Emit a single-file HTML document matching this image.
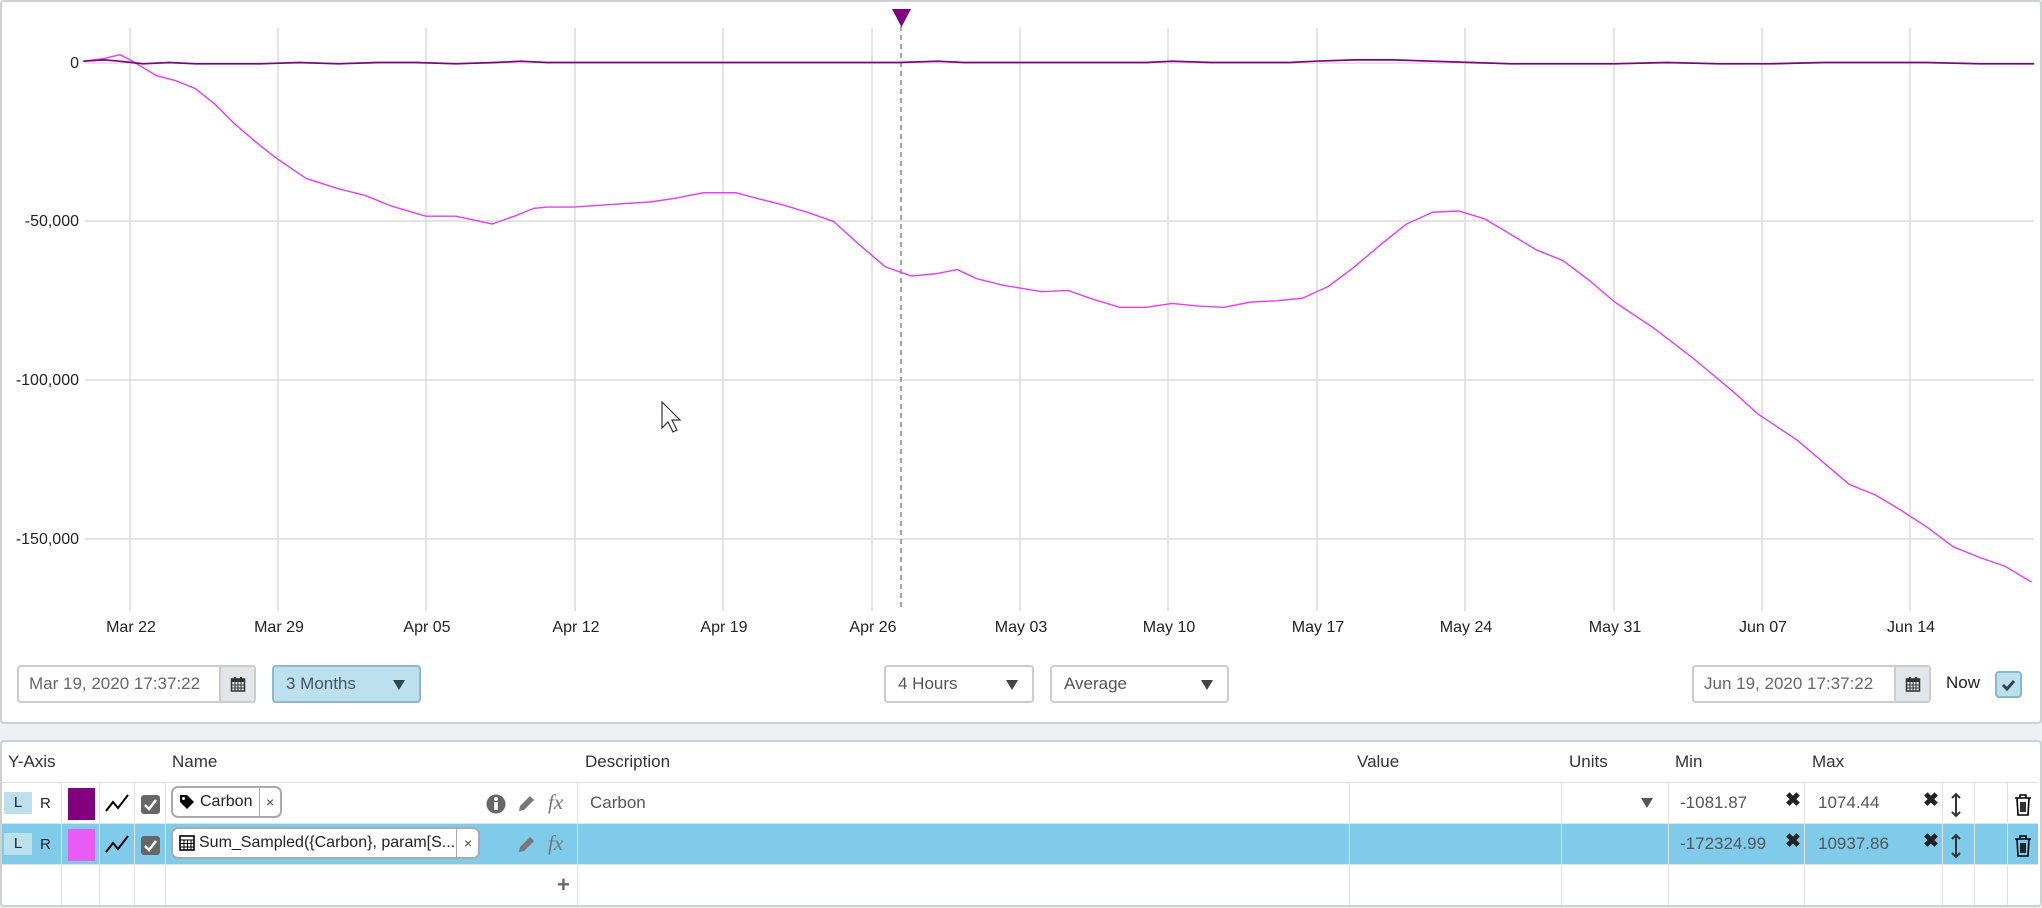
<!DOCTYPE html>
<html><head><meta charset="utf-8"><style>
*{box-sizing:border-box;margin:0;padding:0}
body{width:2042px;height:908px;background:#edf0f4;font-family:"Liberation Sans",sans-serif;position:relative;overflow:hidden;color:#222}
.p{position:absolute;background:#fff;border:2px solid #d0d0d0;border-radius:4px}
.a{position:absolute}
.inp{position:absolute;border:2px solid #ccc;border-radius:4px;background:#fff;font-size:17px;color:#666;padding-left:10px;line-height:34px;height:38px}
.cal{position:absolute;top:0;right:0;width:35px;height:34px;background:#e2e5ea;border-left:2px solid #ccc;display:flex;align-items:center;justify-content:center}
.sel{position:absolute;border:2px solid #ccc;border-radius:4px;background:#fff;font-size:17px;color:#555;padding-left:12px;line-height:34px;height:38px}
.tri{position:absolute;right:14px;top:13px;width:0;height:0;border-left:6px solid transparent;border-right:6px solid transparent;border-top:10px solid #444}
.h{position:absolute;font-size:17px;color:#333;top:752px}
.vl{position:absolute;top:782px;height:123px;width:1px;background:#e2e2e2}
.hl{position:absolute;left:2px;width:2036px;height:1px;background:#e2e2e2}
.t{position:absolute;font-size:17px;color:#555}
</style></head><body>
<div class="p" style="left:0;top:0;width:2042px;height:724px"></div>
<div class="p" style="left:0;top:740px;width:2042px;height:167px"></div>

<svg class="a" style="left:0;top:0" width="2042" height="908" viewBox="0 0 2042 908">
<g stroke="#dcdcdc" stroke-width="1.5">
<line x1="85" y1="63" x2="2034" y2="63"/><line x1="85" y1="221" x2="2034" y2="221"/><line x1="85" y1="380" x2="2034" y2="380"/><line x1="85" y1="539" x2="2034" y2="539"/>
<line x1="130" y1="28" x2="130" y2="611"/><line x1="278" y1="28" x2="278" y2="611"/><line x1="426" y1="28" x2="426" y2="611"/><line x1="575" y1="28" x2="575" y2="611"/><line x1="723" y1="28" x2="723" y2="611"/><line x1="872" y1="28" x2="872" y2="611"/><line x1="1020" y1="28" x2="1020" y2="611"/><line x1="1168" y1="28" x2="1168" y2="611"/><line x1="1317" y1="28" x2="1317" y2="611"/><line x1="1465" y1="28" x2="1465" y2="611"/><line x1="1614" y1="28" x2="1614" y2="611"/><line x1="1762" y1="28" x2="1762" y2="611"/><line x1="1910" y1="28" x2="1910" y2="611"/>
</g>
<g font-size="16" fill="#222" text-anchor="end" font-family="Liberation Sans">
<text x="79" y="68">0</text><text x="79" y="226">-50,000</text><text x="79" y="385">-100,000</text><text x="79" y="544">-150,000</text>
</g>
<g font-size="16" fill="#222" text-anchor="middle" font-family="Liberation Sans">
<text x="131" y="632">Mar 22</text><text x="279" y="632">Mar 29</text><text x="427" y="632">Apr 05</text><text x="576" y="632">Apr 12</text><text x="724" y="632">Apr 19</text><text x="873" y="632">Apr 26</text><text x="1021" y="632">May 03</text><text x="1169" y="632">May 10</text><text x="1318" y="632">May 17</text><text x="1466" y="632">May 24</text><text x="1615" y="632">May 31</text><text x="1763" y="632">Jun 07</text><text x="1911" y="632">Jun 14</text>
</g>
<line x1="901" y1="26" x2="901" y2="611" stroke="#888" stroke-width="1.5" stroke-dasharray="5,4"/>
<polygon points="892,9 911,9 901.5,27" fill="#800080"/>
<g transform="scale(1.3023)">
<polyline fill="none" stroke="#e040fb" stroke-width="1.1" stroke-linejoin="round" points="64,47 80,45 92,42 100,46 110,52 120,58 135,62 150,68 165,80 180,95 200,112 213,122 235,137 260,145 280,150 300,158 327,166 350,166 378,172 395,166 410,160 420,159 440,159 470,157 500,155 520,152 540,148 565,148 580,152 600,157 620,163 640,170 660,188 680,205 700,212 720,210 735,207 750,214 770,219 800,224 820,223 840,230 860,236 880,236 900,233 920,235 940,236 960,232 980,231 1000,229 1020,220 1040,205 1060,188 1080,172 1100,163 1120,162 1140,168 1160,180 1180,192 1200,200 1220,215 1240,232 1270,252 1300,275 1330,300 1350,318 1380,338 1400,355 1420,372 1440,380 1460,392 1480,405 1500,420 1520,428 1540,435 1560,447"/>
<polyline fill="none" stroke="#800080" stroke-width="1.3" points="64,47 80,46 92,47 110,49 130,48 150,49 170,49 200,49 230,48 260,49 290,48 320,48 350,49 380,48 400,47 420,48 450,48 480,48 510,48 540,48 570,48 600,48 630,48 660,48 690,48 720,47 740,48 760,48 790,48 820,48 850,48 880,48 900,47 930,48 960,48 990,48 1010,47 1040,46 1070,46 1100,47 1130,48 1160,49 1200,49 1240,49 1280,48 1320,49 1360,49 1400,48 1440,48 1480,48 1520,49 1562,49"/>
</g>
<path d="M662,402 L662,428 L668,422 L673,432 L677,430 L672,420 L680,420 Z" fill="#fff" stroke="#333" stroke-width="1.2"/>
</svg>

<div class="inp" style="left:17px;top:665px;width:239px">Mar 19, 2020 17:37:22<div class="cal"><svg width="16" height="16" viewBox="0 0 16 16"><rect x="1.5" y="3" width="13" height="12" fill="none" stroke="#333" stroke-width="1.5"/><rect x="1.5" y="3" width="13" height="3" fill="#333"/><path d="M2 9h12M2 12h12M5 6v9M8 6v9M11 6v9" stroke="#333"/><rect x="4" y="1" width="2" height="3" fill="#333"/><rect x="10" y="1" width="2" height="3" fill="#333"/></svg></div></div>
<div class="sel" style="left:272px;top:665px;width:149px;background:#bde0ee;border-color:#8ab8cc;color:#456">3 Months<div class="tri" style="border-top-color:#345"></div></div>
<div class="sel" style="left:884px;top:665px;width:150px">4 Hours<div class="tri"></div></div>
<div class="sel" style="left:1050px;top:665px;width:179px">Average<div class="tri"></div></div>
<div class="inp" style="left:1692px;top:665px;width:239px">Jun 19, 2020 17:37:22<div class="cal"><svg width="16" height="16" viewBox="0 0 16 16"><rect x="1.5" y="3" width="13" height="12" fill="none" stroke="#333" stroke-width="1.5"/><rect x="1.5" y="3" width="13" height="3" fill="#333"/><path d="M2 9h12M2 12h12M5 6v9M8 6v9M11 6v9" stroke="#333"/><rect x="4" y="1" width="2" height="3" fill="#333"/><rect x="10" y="1" width="2" height="3" fill="#333"/></svg></div></div>
<div class="a" style="left:1946px;top:673px;font-size:17px;color:#222">Now</div>
<div class="a" style="left:1995px;top:671px;width:27px;height:27px;background:#bde0ee;border:2px solid #8ab8cc;border-radius:4px"><svg width="23" height="23" viewBox="0 0 23 23"><path d="M6 12l4 4 7-8" fill="none" stroke="#345" stroke-width="3"/></svg></div>

<div class="a" style="left:2px;top:823px;width:2036px;height:41px;background:#80cbea"></div>
<div class="hl" style="top:782px"></div><div class="hl" style="top:823px"></div><div class="hl" style="top:864px"></div>
<div class="vl" style="left:61px"></div><div class="vl" style="left:99px"></div><div class="vl" style="left:134px"></div><div class="vl" style="left:165px"></div><div class="vl" style="left:577px"></div><div class="vl" style="left:1349px"></div><div class="vl" style="left:1561px"></div><div class="vl" style="left:1668px"></div><div class="vl" style="left:1804px"></div><div class="vl" style="left:1942px"></div><div class="vl" style="left:1974px"></div><div class="vl" style="left:2007px"></div>
<div class="h" style="left:8px">Y-Axis</div><div class="h" style="left:172px">Name</div><div class="h" style="left:585px">Description</div><div class="h" style="left:1357px">Value</div><div class="h" style="left:1569px">Units</div><div class="h" style="left:1675px">Min</div><div class="h" style="left:1812px">Max</div>

<div class="a" style="left:4px;top:792px;width:28px;height:22px;background:#bde0ee;font-size:15px;text-align:center;line-height:22px">L</div><div class="a" style="left:40px;top:795px;font-size:15px">R</div>
<div class="a" style="left:68px;top:788px;width:27px;height:32px;background:#800080"></div>
<svg class="a" style="left:104px;top:792px" width="26" height="22"><path d="M2 19l7-9 5 6 10-13" fill="none" stroke="#000" stroke-width="2"/></svg>
<div class="a" style="left:141px;top:795px;width:19px;height:19px;background:#666;border-radius:3px"><svg width="19" height="19"><path d="M4 10l4 4 7-9" fill="none" stroke="#fff" stroke-width="2.5"/></svg></div>
<div class="a" style="left:171px;top:786px;width:111px;height:32px;border:2px solid #aaa;border-radius:7px;font-size:16px;line-height:28px;padding-left:27px;color:#222">Carbon<div class="a" style="left:86px;top:0;width:1px;height:28px;background:#aaa"></div><span class="a" style="left:93px;top:0;font-size:14px;color:#444">×</span><svg class="a" style="left:6px;top:6px" width="16" height="16"><path d="M1 1h7l7 7-7 7-7-7z" fill="#000"/><circle cx="4.5" cy="4.5" r="1.5" fill="#fff"/></svg></div>
<svg class="a" style="left:486px;top:794px" width="20" height="20"><circle cx="10" cy="10" r="9.5" fill="#666"/><rect x="8.2" y="8" width="3.6" height="8" fill="#fff"/><circle cx="10" cy="5" r="2" fill="#fff"/></svg>
<svg class="a" style="left:516px;top:794px" width="20" height="20"><path d="M3 17l1-5L14 2l4 4L8 16z" fill="#777"/></svg>
<div class="a" style="left:548px;top:790px;font-family:'Liberation Serif',serif;font-style:italic;font-size:21px;color:#777">fx</div>
<div class="t" style="left:590px;top:793px">Carbon</div>
<div class="a" style="left:1641px;top:798px;border-left:6px solid transparent;border-right:6px solid transparent;border-top:10px solid #555"></div>
<div class="t" style="left:1680px;top:793px">-1081.87</div><div class="a" style="left:1785px;top:789px;font-size:19px;font-weight:bold">✖</div>
<div class="t" style="left:1818px;top:793px">1074.44</div><div class="a" style="left:1923px;top:789px;font-size:19px;font-weight:bold">✖</div>
<svg class="a" style="left:1950px;top:792px" width="12" height="26"><path d="M6 2v22M2 6l4-4 4 4M2 20l4 4 4-4" fill="none" stroke="#333" stroke-width="2"/></svg>
<svg class="a" style="left:2014px;top:794px" width="18" height="22"><path d="M1 4h16M6 4V1h6v3M3 4l1 17h10l1-17M7 8v10M9 8v10M11 8v10" fill="none" stroke="#000" stroke-width="1.6"/></svg>

<div class="a" style="left:4px;top:833px;width:28px;height:22px;background:#bde0ee;font-size:15px;text-align:center;line-height:22px">L</div><div class="a" style="left:40px;top:836px;font-size:15px">R</div>
<div class="a" style="left:68px;top:829px;width:27px;height:32px;background:#e85cf5"></div>
<svg class="a" style="left:104px;top:833px" width="26" height="22"><path d="M2 19l7-9 5 6 10-13" fill="none" stroke="#000" stroke-width="2"/></svg>
<div class="a" style="left:141px;top:836px;width:19px;height:19px;background:#666;border-radius:3px"><svg width="19" height="19"><path d="M4 10l4 4 7-9" fill="none" stroke="#fff" stroke-width="2.5"/></svg></div>
<div class="a" style="left:171px;top:827px;width:309px;height:32px;border:2px solid #aaa;border-radius:7px;background:#fff;font-size:16px;line-height:28px;padding-left:26px;color:#222;white-space:nowrap;overflow:hidden">Sum_Sampled({Carbon}, param[S...<div class="a" style="left:283px;top:0;width:24px;height:28px;background:#fff;border-left:1px solid #aaa"></div><span class="a" style="left:291px;top:0;font-size:14px;color:#444">×</span><svg class="a" style="left:6px;top:6px" width="16" height="16"><rect x="1" y="1" width="14" height="14" fill="none" stroke="#000" stroke-width="1.6"/><path d="M1 5h14M1 8.5h14M1 12h14M5 5v10M8.5 5v10M12 5v10" stroke="#000"/></svg></div>
<svg class="a" style="left:516px;top:835px" width="20" height="20"><path d="M3 17l1-5L14 2l4 4L8 16z" fill="#777"/></svg>
<div class="a" style="left:548px;top:831px;font-family:'Liberation Serif',serif;font-style:italic;font-size:21px;color:#777">fx</div>
<div class="t" style="left:1680px;top:834px">-172324.99</div><div class="a" style="left:1785px;top:830px;font-size:19px;font-weight:bold">✖</div>
<div class="t" style="left:1818px;top:834px">10937.86</div><div class="a" style="left:1923px;top:830px;font-size:19px;font-weight:bold">✖</div>
<svg class="a" style="left:1950px;top:833px" width="12" height="26"><path d="M6 2v22M2 6l4-4 4 4M2 20l4 4 4-4" fill="none" stroke="#333" stroke-width="2"/></svg>
<svg class="a" style="left:2014px;top:835px" width="18" height="22"><path d="M1 4h16M6 4V1h6v3M3 4l1 17h10l1-17M7 8v10M9 8v10M11 8v10" fill="none" stroke="#000" stroke-width="1.6"/></svg>

<div class="a" style="left:557px;top:872px;font-size:22px;font-weight:bold;color:#666">+</div>
</body></html>
